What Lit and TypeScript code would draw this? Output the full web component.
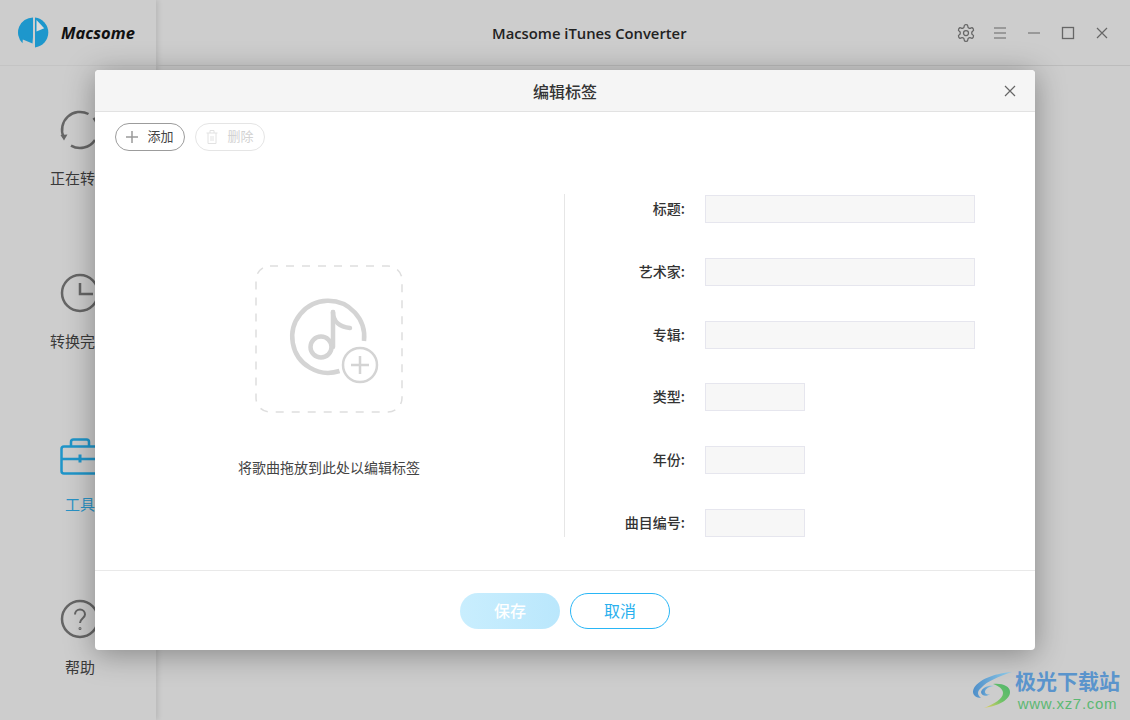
import { LitElement, html, css, svg } from "lit";
import { customElement } from "lit/decorators.js";

const navItems = [
  {
    label: "正在转换",
    active: false,
    icon: svg`<path d="M2.5 26A18 18 0 0 1 27.500 3" /><path d="M32.500 7A18 18 0 0 1 37 19" /><path d="M10 34.600A18 18 0 0 0 34 29" /><path class="solid" d="M-.5 24l7-.5L3 29.500z" />`,
  },
  {
    label: "转换完成",
    active: false,
    icon: svg`<circle cx="19" cy="19" r="18" /><path d="M19 9v11h13" />`,
  },
  {
    label: "工具",
    active: true,
    icon: svg`<rect x=".5" y="9.500" width="37" height="27" rx="2.500" /><path d="M10 9.500V5a2.500 2.500 0 0 1 2.500-2.500h13A2.500 2.500 0 0 1 28 5v4.500" /><path d="M.5 22h37" /><path d="M19 17.500v8" stroke-width="3" />`,
  },
  {
    label: "帮助",
    active: false,
    icon: svg`<circle cx="19" cy="19" r="18" /><path class="thin" d="M14 14.500a5 5 0 0 1 10 0c0 3.500-5 4-5 8.500" /><circle class="thin" cx="19" cy="28.500" r=".5" />`,
  },
];

const fields = [
  { label: "标题", short: false },
  { label: "艺术家", short: false },
  { label: "专辑", short: false },
  { label: "类型", short: true },
  { label: "年份", short: true },
  { label: "曲目编号", short: true },
];

@customElement("app-root")
export class AppRoot extends LitElement {
  static styles = css`
    :host {
      display: block;
      position: relative;
      height: 720px;
      overflow: hidden;
      background: #cdcdcd;
      font-family: "Noto Sans CJK SC", "Noto Sans", sans-serif;
      color: #333;
    }
    .window {
      display: flex;
      height: 100%;
    }
    .sidebar {
      width: 156px;
      flex: none;
      box-shadow: 2px 0 5px rgba(0, 0, 0, 0.1);
    }
    .logo {
      height: 65px;
      border-bottom: 1px solid #c4c4c4;
      display: flex;
      align-items: center;
      gap: 12px;
      padding-left: 18px;
    }
    .logo span {
      font: italic 700 16.500px "Open Sans", sans-serif;
      color: #111;
    }
    nav {
      display: grid;
      grid-auto-rows: 163px;
      padding: 45px 0 0 4px;
    }
    .nav-item {
      display: flex;
      flex-direction: column;
      align-items: center;
      gap: 19px;
      font-size: 15px;
      line-height: 20px;
      color: #3a3a3a;
    }
    .nav-item svg {
      fill: none;
      stroke: #666;
      stroke-width: 2.500;
      overflow: visible;
    }
    .nav-item svg .solid {
      fill: #666;
      stroke: none;
    }
    .nav-item svg .thin {
      stroke-width: 2;
    }
    .nav-item.active {
      color: #2a93c6;
    }
    .nav-item.active svg {
      stroke: #1f95c9;
    }
    .main {
      flex: 1;
    }
    .titlebar {
      height: 65px;
      border-bottom: 1px solid #bcbcbc;
      display: flex;
      align-items: center;
      padding: 0 11px 0 336px;
    }
    .title {
      font: 600 14.800px "Open Sans", sans-serif;
      color: #222;
    }
    .controls {
      margin-left: auto;
      display: flex;
    }
    .controls div {
      width: 34px;
      display: flex;
      justify-content: center;
      align-items: center;
    }
    .controls svg {
      fill: none;
      stroke: #666;
    }
    .controls svg.light {
      stroke: #999;
    }

    .modal {
      position: absolute;
      left: 95px;
      top: 70px;
      width: 940px;
      height: 580px;
      background: #fff;
      border-radius: 4px;
      box-shadow: 0 4px 30px rgba(0, 0, 0, 0.35);
      display: flex;
      flex-direction: column;
    }
    .modal-head {
      height: 41px;
      flex: none;
      background: #f5f5f5;
      border-bottom: 1px solid #e2e2e2;
      border-radius: 4px 4px 0 0;
      display: flex;
      align-items: center;
      justify-content: center;
      position: relative;
      font-size: 16px;
      font-weight: 500;
      color: #333;
    }
    .modal-head svg {
      position: absolute;
      right: 19px;
      top: 15px;
      fill: none;
      stroke: #666;
    }
    .toolbar {
      height: 82px;
      flex: none;
      box-sizing: border-box;
      padding: 11px 0 0 20px;
      display: flex;
      align-items: flex-start;
      gap: 10px;
    }
    .tool {
      width: 70px;
      height: 28px;
      box-sizing: border-box;
      border: 1px solid #9c9c9c;
      border-radius: 14px;
      display: flex;
      align-items: center;
      justify-content: center;
      gap: 9px;
      font-size: 13px;
      color: #444;
    }
    .tool span {
      padding-bottom: 3px;
    }
    .tool.off {
      border-color: #e5e5e5;
      color: #d2d2d2;
    }
    .tool svg {
      fill: none;
      stroke: #9a9a9a;
    }
    .tool.off svg {
      stroke: #e2e2e2;
    }
    .content {
      height: 343px;
      flex: none;
      display: flex;
    }
    .drop {
      width: 470px;
      flex: none;
      box-sizing: border-box;
      border-right: 1px solid #e6e6e6;
      display: flex;
      flex-direction: column;
      align-items: center;
      padding: 71px 1px 0 0;
      font-size: 14px;
      color: #444;
    }
    .drop svg {
      margin-bottom: 44px;
      fill: none;
      stroke: #d4d4d4;
    }
    .form {
      flex: 1;
      display: flex;
      flex-direction: column;
      gap: 34.800px;
      padding-top: 1px;
    }
    .row {
      display: flex;
      align-items: center;
      gap: 20px;
      height: 28px;
    }
    .row label {
      width: 120px;
      padding-bottom: 2px;
      text-align: right;
      font-size: 14px;
      font-weight: 500;
      color: #333;
    }
    .input {
      width: 270px;
      height: 28px;
      box-sizing: border-box;
      background: #f7f7f7;
      border: 1px solid #e6e6ee;
    }
    .input.short {
      width: 100px;
    }
    .footer {
      margin-top: 33px;
      flex: 1;
      border-top: 1px solid #e9e9e9;
      display: flex;
      justify-content: center;
      gap: 10px;
      padding-top: 22px;
    }
    .btn {
      width: 100px;
      height: 36px;
      box-sizing: border-box;
      border-radius: 18px;
      padding-bottom: 2px;
      display: flex;
      align-items: center;
      justify-content: center;
      font-size: 16px;
    }
    .btn.save {
      background: linear-gradient(90deg, #c9eefe, #bae7fc);
      color: #fff;
      font-weight: 500;
    }
    .btn.cancel {
      border: 1px solid #29b6f6;
      color: #29b0ee;
    }

    .watermark {
      position: absolute;
      left: 972px;
      top: 666px;
      display: flex;
      gap: 1px;
    }
    .watermark svg {
      margin-top: 2px;
    }
    .wm-text {
      display: flex;
      flex-direction: column;
      align-items: center;
    }
    .wm-cn {
      font-size: 21px;
      line-height: 29px;
      font-weight: 700;
      color: #5a94cc;
    }
    .wm-en {
      font: 400 15px/18px "Liberation Sans", sans-serif;
      color: #5cb873;
      letter-spacing: 0.7px;
    }
  `;

  render() {
    return html`
      <div class="window">
        <aside class="sidebar">
          <div class="logo">
            <svg width="31" height="31" viewBox="0 0 31 31">
              <path d="M15 .5A15 15 0 0 0 4.500 26.200l.3-3.700 9.700 4L15 20z" fill="#1d97cc" />
              <path d="M17 .6A15 15 0 0 1 17 30.400z" fill="#1d97cc" />
              <path d="M18.500 3l7.700 8.300-7.700 3.200z" fill="#dcdcdc" />
            </svg>
            <span>Macsome</span>
          </div>
          <nav>
            ${navItems.map(
              (n) => html`
                <div class="nav-item ${n.active ? "active" : ""}">
                  <svg width="38" height="38" viewBox="0 0 38 38">${n.icon}</svg>
                  <span>${n.label}</span>
                </div>
              `
            )}
          </nav>
        </aside>
        <div class="main">
          <header class="titlebar">
            <span class="title">Macsome iTunes Converter</span>
            <div class="controls">
              <div>
                <svg width="20" height="20" viewBox="0 0 24 24" stroke-width="1.500">
                  <path d="M12.220 2h-.44a2 2 0 0 0-2 2v.18a2 2 0 0 1-1 1.730l-.43.25a2 2 0 0 1-2 0l-.15-.08a2 2 0 0 0-2.730.73l-.22.38a2 2 0 0 0 .73 2.730l.15.1a2 2 0 0 1 1 1.720v.51a2 2 0 0 1-1 1.740l-.15.09a2 2 0 0 0-.73 2.730l.22.38a2 2 0 0 0 2.730.73l.15-.08a2 2 0 0 1 2 0l.43.25a2 2 0 0 1 1 1.730V20a2 2 0 0 0 2 2h.44a2 2 0 0 0 2-2v-.18a2 2 0 0 1 1-1.730l.43-.25a2 2 0 0 1 2 0l.15.08a2 2 0 0 0 2.730-.73l.22-.39a2 2 0 0 0-.73-2.730l-.15-.08a2 2 0 0 1-1-1.740v-.5a2 2 0 0 1 1-1.740l.15-.09a2 2 0 0 0 .73-2.730l-.22-.38a2 2 0 0 0-2.730-.73l-.15.08a2 2 0 0 1-2 0l-.43-.25a2 2 0 0 1-1-1.730V4a2 2 0 0 0-2-2z" />
                  <circle cx="12" cy="12" r="3" />
                </svg>
              </div>
              <div>
                <svg class="light" width="14" height="14" viewBox="0 0 14 14" stroke-width="2">
                  <path d="M1 2h12M1 7h12M1 12h12" />
                </svg>
              </div>
              <div>
                <svg class="light" width="14" height="14" viewBox="0 0 14 14" stroke-width="2">
                  <path d="M1 7h12" />
                </svg>
              </div>
              <div>
                <svg width="14" height="14" viewBox="0 0 14 14" stroke-width="1.300">
                  <rect x="1.500" y="1.500" width="11" height="11" />
                </svg>
              </div>
              <div>
                <svg width="14" height="14" viewBox="0 0 14 14" stroke-width="1.200">
                  <path d="M2 2l10 10M12 2L2 12" />
                </svg>
              </div>
            </div>
          </header>
        </div>
      </div>

      <section class="modal">
        <div class="modal-head">
          编辑标签
          <svg width="12" height="12" viewBox="0 0 12 12" stroke-width="1.200">
            <path d="M1 1l10 10M11 1L1 11" />
          </svg>
        </div>
        <div class="toolbar">
          <div class="tool">
            <svg width="12" height="12" viewBox="0 0 12 12" stroke-width="1.500">
              <path d="M6 0v12M0 6h12" />
            </svg>
            <span>添加</span>
          </div>
          <div class="tool off">
            <svg width="12" height="14" viewBox="0 0 12 14" stroke-width="1">
              <path d="M2 3v10.500h8V3M.5 3h11M4 3V.5h4V3M5 6v5M7 6v5" />
            </svg>
            <span>删除</span>
          </div>
        </div>
        <div class="content">
          <div class="drop">
            <svg width="148" height="148" viewBox="0 0 148 148">
              <rect x="1" y="1" width="146" height="146" rx="14" stroke="#dedede" stroke-width="1.500" stroke-dasharray="8 8" />
              <path d="M109 76A36 36 0 1 0 84.500 106" stroke-width="4.500" />
              <path d="M78 47v35" stroke-width="4.500" stroke-linecap="round" />
              <path d="M78 47c0 10 7 15 17 16" stroke-width="4.500" stroke-linecap="round" />
              <circle cx="66" cy="82" r="10.500" stroke-width="4.500" />
              <circle cx="105" cy="100" r="17" stroke-width="2.500" />
              <path d="M96 100h18M105 91v18" stroke-width="2.500" />
            </svg>
            <span>将歌曲拖放到此处以编辑标签</span>
          </div>
          <div class="form">
            ${fields.map(
              (f) => html`
                <div class="row">
                  <label>${f.label}:</label>
                  <div class="input ${f.short ? "short" : ""}"></div>
                </div>
              `
            )}
          </div>
        </div>
        <div class="footer">
          <div class="btn save">保存</div>
          <div class="btn cancel">取消</div>
        </div>
      </section>

      <div class="watermark">
        <svg width="42" height="42" viewBox="0 0 42 42" fill="none">
          <defs>
            <linearGradient id="wa" x1="0" y1="0" x2="1" y2="0">
              <stop offset="0" stop-color="#4f8fc9" />
              <stop offset="1" stop-color="#8fcbe8" />
            </linearGradient>
            <linearGradient id="wb" x1="0" y1="1" x2="1" y2="0">
              <stop offset="0" stop-color="#e6cf62" />
              <stop offset=".5" stop-color="#6cc268" />
              <stop offset="1" stop-color="#4fb56c" />
            </linearGradient>
          </defs>
          <path d="M40 4C26 5 8 10 2 20c-3 6 1 10 7 10-4-3-4-7 0-10C15 13 28 8 40 4z" fill="url(#wa)" />
          <path d="M9 24c1-4 7-7 13-6-5 .5-9 3-9 6 0 2 3 3 5 2-3 3-9 2-9-2z" fill="url(#wa)" />
          <path d="M21 16c9-1 17 2 17 8 0 8-12 14-26 16 10-4 19-9 19-15 0-4-4-7-10-9z" fill="url(#wb)" />
        </svg>
        <div class="wm-text">
          <span class="wm-cn">极光下载站</span>
          <span class="wm-en">www.xz7.com</span>
        </div>
      </div>
    `;
  }
}
